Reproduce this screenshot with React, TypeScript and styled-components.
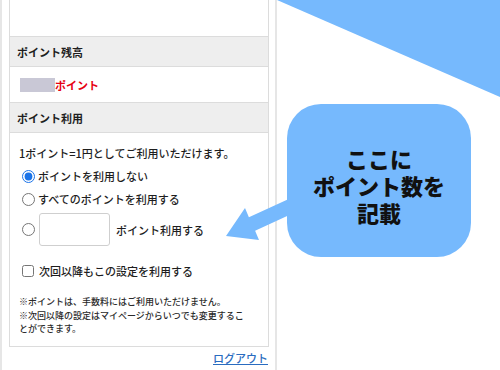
import React from "react";
import styled, { createGlobalStyle } from "styled-components";

const Global = createGlobalStyle`
  html, body { margin: 0; padding: 0; background: #fff; }
  body { font-family: "Noto Sans CJK JP", "Noto Sans", sans-serif; color: #222; }
  * { box-sizing: border-box; }
`;

const Page = styled.div`
  position: relative;
  width: 500px;
  height: 370px;
  overflow: hidden;
  display: flex;
  align-items: stretch;
`;

const Rule = styled.div<{ $left: number }>`
  width: 2px;
  flex: none;
  margin-left: ${(p) => p.$left}px;
  background: #e6e6e6;
`;

const Column = styled.div`
  width: 260px;
  flex: none;
  margin-left: 7px;
  display: flex;
  flex-direction: column;
`;

const Panel = styled.div`
  border: 1px solid #dcdcdc;
  border-top: none;
  display: flex;
  flex-direction: column;
`;

const Blank = styled.div`
  height: 37px;
  border-bottom: 1px solid #dcdcdc;
`;

const Header = styled.div`
  height: 30px;
  display: flex;
  align-items: center;
  padding-left: 7px;
  background: #eeeeee;
  border-bottom: 1px solid #dcdcdc;
  font-size: 11px;
  font-weight: 700;
  color: #1e1e1e;
`;

const ValueRow = styled.div`
  height: 36px;
  display: flex;
  align-items: center;
  padding-left: 10px;
  border-bottom: 1px solid #dcdcdc;
`;

const Masked = styled.span`
  width: 35px;
  height: 14px;
  background: #c9c8d6;
`;

const RedText = styled.span`
  font-size: 11px;
  font-weight: 700;
  color: #e60012;
`;

const Body = styled.div`
  display: flex;
  flex-direction: column;
  padding: 12px 8px 10px 9px;
  font-size: 11px;
  font-weight: 500;
  color: #1e1e1e;
`;

const Line = styled.div<{ $mt?: number }>`
  margin-top: ${(p) => p.$mt ?? 0}px;
  line-height: 16px;
  height: 16px;
  display: flex;
  align-items: center;
`;

const Option = styled.label<{ $mt: number; $h?: number }>`
  margin-top: ${(p) => p.$mt}px;
  height: ${(p) => p.$h ?? 16}px;
  display: flex;
  align-items: center;
  gap: 3px;
`;

const Radio = styled.input.attrs({ type: "radio" })`
  width: 13px;
  height: 13px;
  margin: 0 0 0 3px;
  accent-color: #1a73e8;
  flex: none;
`;

const Check = styled.input.attrs({ type: "checkbox" })`
  width: 12px;
  height: 12px;
  margin: 0 2px 0 3px;
  flex: none;
`;

const NumberBox = styled.input.attrs({ type: "text" })`
  width: 71px;
  height: 33px;
  margin: 0 3px 0 1px;
  border: 1px solid #cfcfcf;
  border-radius: 3px;
  background: #fff;
`;

const Notes = styled.div`
  margin-top: 16px;
  font-size: 9px;
  line-height: 13.5px;
  color: #2a2a2a;
`;

const LinkRow = styled.div`
  display: flex;
  justify-content: flex-end;
  padding-top: 3px;
`;

const Logout = styled.a`
  font-size: 11px;
  font-weight: 500;
  color: #2a6cc0;
  text-decoration: underline;
  margin-right: 1px;
`;

const Overlay = styled.svg`
  position: absolute;
  left: 0;
  top: 0;
  pointer-events: none;
`;

const Bubble = styled.div`
  position: absolute;
  left: 287px;
  top: 104px;
  width: 184px;
  height: 153px;
  border-radius: 34px;
  background: #76b9fd;
  display: flex;
  flex-direction: column;
  align-items: center;
  justify-content: center;
  font-size: 22px;
  font-weight: 900;
  line-height: 27px;
  color: #111;
  padding-top: 10px;
`;

export default function App() {
  return (
    <>
      <Global />
      <Page>
        <Rule $left={0} />
        <Column>
          <Panel>
            <Blank />
            <Header>ポイント残高</Header>
            <ValueRow>
              <Masked />
              <RedText>ポイント</RedText>
            </ValueRow>
            <Header>ポイント利用</Header>
            <Body>
              <Line>1ポイント=1円としてご利用いただけます。</Line>
              <Option $mt={7}>
                <Radio name="use" defaultChecked />
                ポイントを利用しない
              </Option>
              <Option $mt={7}>
                <Radio name="use" />
                すべてのポイントを利用する
              </Option>
              <Option $mt={6} $h={33}>
                <Radio name="use" />
                <NumberBox />
                ポイント利用する
              </Option>
              <Option $mt={17}>
                <Check />
                次回以降もこの設定を利用する
              </Option>
              <Notes>
                ※ポイントは、手数料にはご利用いただけません。
                <br />
                ※次回以降の設定はマイページからいつでも変更するこ
                <br />
                とができます。
              </Notes>
            </Body>
          </Panel>
          <LinkRow>
            <Logout href="#">ログアウト</Logout>
          </LinkRow>
        </Column>
        <Rule $left={6} />
        <Overlay width={500} height={370} viewBox="0 0 500 370">
          <polygon points="277,0 500,0 500,97" fill="#76b9fd" />
          <polygon
            points="226,236 245,208 248.9,217.2 292,197.5 298,211 255.1,230.8 259,240"
            fill="#76b9fd"
          />
        </Overlay>
        <Bubble>
          <span>ここに</span>
          <span>ポイント数を</span>
          <span>記載</span>
        </Bubble>
      </Page>
    </>
  );
}
